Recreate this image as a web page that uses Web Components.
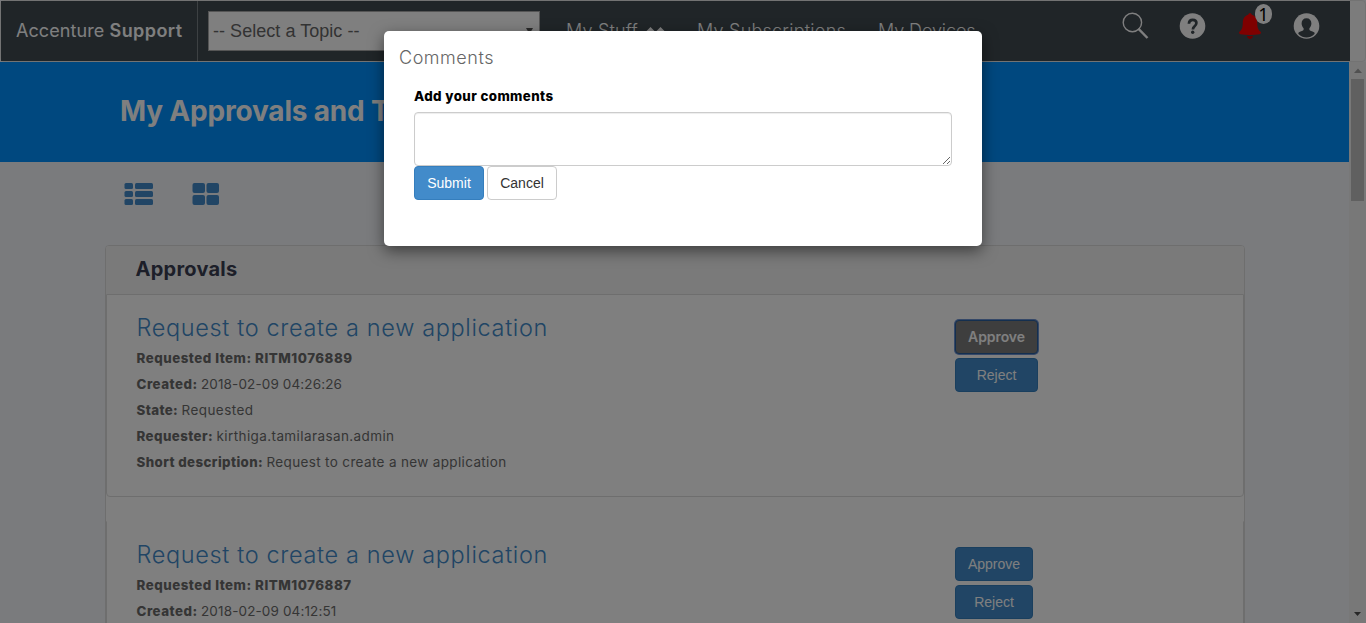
<!DOCTYPE html>
<html lang="en">
<head>
<meta charset="utf-8">
<title>My Approvals and Tasks</title>
<style>
html,body{margin:0;height:100%;overflow:hidden;background:#f4f6fa}
body{font-family:Inter,"Open Sans",sans-serif;color:#777}
</style>
</head>
<body>
<support-app></support-app>
<script>
const define = (name, html, setup) => customElements.define(name, class extends HTMLElement {
  constructor() {
    super();
    const t = document.createElement('template');
    t.innerHTML = html;
    this.attachShadow({mode: 'open'}).append(t.content.cloneNode(true));
  }
  connectedCallback() { if (setup) setup(this, this.shadowRoot); }
});

/* Text tracked so that its run has the width given in "w". */
define('tracked-text', `<style>:host{display:inline-block;white-space:pre}span{display:inline-block}</style><span><slot></slot></span>`, (el, root) => {
  const span = root.querySelector('span');
  const w = +el.getAttribute('w');
  const n = el.textContent.length;
  span.style.letterSpacing = '0px';
  const natural = span.getBoundingClientRect().width;
  if (w && natural) span.style.letterSpacing = ((w - natural) / n) + 'px';
});

define('topic-select', `<style>
:host{display:flex;box-sizing:border-box;width:332px;height:40px;border:1px solid #aaa;background:#fff;align-items:center;justify-content:space-between;padding:0 6px 1px 4px;font:18px/38px "Liberation Sans",Arial,sans-serif;color:#666}
svg{display:block}
</style><tracked-text w="146.5">-- Select a Topic --</tracked-text><svg width="7" height="6"><path d="M0 0h7L3.5 6z" fill="#555"/></svg>`);

define('header-icons', `<style>
:host{display:flex;position:relative;height:60px;flex:none}
svg{display:block}
.badge{position:absolute;left:134px;top:3px;width:17px;height:20px;border-radius:9px/10px;background:#fff;color:#000;font:18px/20px "Noto Sans",sans-serif;text-align:center}
</style><svg width="229" height="60" viewBox="1121 1 229 60">
<circle cx="1132.4" cy="22.5" r="9.2" fill="none" stroke="#fff" stroke-width="1.4"/>
<path d="M1138.3 28.7l9.2 9.3" stroke="#fff" stroke-width="2.4" fill="none"/>
<circle cx="1192.5" cy="26" r="12.8" fill="#fff"/>
<path d="M1188.9 23.7c.1-2.5 1.5-3.9 3.8-3.9 2.2 0 3.7 1.3 3.7 3.3 0 1.6-.8 2.4-2 3.4-1 .9-1.5 1.4-1.5 2.9" fill="none" stroke="#404a51" stroke-width="2.7"/>
<circle cx="1192.7" cy="32.3" r="1.7" fill="#404a51"/>
<path d="M1250 13.2c1.2 0 1.6.7 1.8 1.6 3.8 1.2 5.3 4.1 5.4 7.7.1 5 .8 7.4 3.4 9.3.9.8.1 2.2-1 2.4-5.9 1.1-13.4 1.1-19.2 0-1.1-.2-1.9-1.6-1-2.4 2.6-1.900 3.300-4.300 3.400-9.300.1-3.600 1.600-6.500 5.400-7.700.2-.9.6-1.600 1.800-1.600z" fill="#ff0000"/>
<path d="M1247 35.800c2 .3 4 .3 6 0 0 4.200-6 4.200-6 0z" fill="#d00000"/>
<circle cx="1306.500" cy="26" r="12.800" fill="#fff"/>
<path d="M1306.500 18.200c3 0 4.900 2 4.900 5 0 2-.8 3.900-2 5.100v1.500c.3 1.200 2.600 1.500 4.600 2.400 1 .5.8 1.600 0 2.400-2 2-4.700 3-7.500 3s-5.500-1-7.500-3c-.8-.8-1-1.900 0-2.400 2-.9 4.300-1.200 4.600-2.400v-1.500c-1.200-1.200-2-3.100-2-5.100 0-3 1.900-5 4.900-5z" fill="#404a51"/>
</svg><span class="badge">1</span>`);

define('top-bar', `<style>
:host{display:block;box-sizing:border-box;height:62px;border:1px solid #e7e7e7;border-radius:4px;background:#f8f8f8}
.bar{display:flex;width:1349px;height:60px;background:#404a51;color:#fff}
.brand{box-sizing:border-box;width:197px;border-right:1px solid #7b8387;padding-left:15px;font-size:18px;line-height:60px;white-space:nowrap}
.brand b{font-weight:600}
topic-select{margin:10px 0 0 10px}
nav{display:flex;padding-left:26px;font-size:18px;line-height:60px;flex:1;font-weight:300}
.stuff{width:131px;display:flex}.subs{width:181px}
.stuff svg{margin:25px 0 0 8px}
</style><div class="bar"><div class="brand"><tracked-text w="93.5">Accenture </tracked-text><b><tracked-text w="73">Support</tracked-text></b></div>
<topic-select></topic-select>
<nav><span class="stuff"><tracked-text w="72">My Stuff</tracked-text><svg width="20" height="10"><path d="M0 5.500l4.500-4.500L9 5.500 4.500 9.500zM10 5.500l4.500-4.500L19 5.500l-4.500 4z" fill="#fff"/></svg></span><span class="subs"><tracked-text w="149">My Subscriptions</tracked-text></span><span><tracked-text w="97.5">My Devices</tracked-text></span></nav>
<header-icons></header-icons></div>`);

define('page-banner', `<style>
:host{display:block;height:100px;background:#0090ff;color:#fff;padding-left:120px;font-size:28px;font-weight:700;line-height:98px;white-space:nowrap}
</style><tracked-text w="251">My Approvals and </tracked-text><tracked-text>T</tracked-text>`);

define('view-switch', `<style>
:host{display:flex;height:83px;padding-left:124px;gap:39px}svg{display:block;margin-top:21px}
</style><svg width="29" height="23" fill="#428bca"><rect x=".5" width="8.500" height="6" rx="1.500"/><rect x="11" width="18" height="6" rx="1.500"/><rect x=".5" y="8" width="8.500" height="6" rx="1.500"/><rect x="11" y="8" width="18" height="6" rx="1.500"/><rect x=".5" y="16" width="8.500" height="6" rx="1.500"/><rect x="11" y="16" width="18" height="6" rx="1.500"/></svg>
<svg width="28" height="23" fill="#428bca"><rect x=".5" width="12.500" height="10" rx="2"/><rect x="14.500" width="12.500" height="10" rx="2"/><rect x=".5" y="12" width="12.500" height="10" rx="2"/><rect x="14.500" y="12" width="12.500" height="10" rx="2"/></svg>`);

define('ui-button', `<style>
:host{display:block}
button{display:block;box-sizing:border-box;width:100%;height:34px;margin:0;padding:0;border:1px solid #357ebd;border-radius:4px;background:#428bca;color:#fff;font:14px/20px "Liberation Sans",Arial,sans-serif;text-align:center}
:host([kind=plain]) button{background:#fff;border-color:#ccc;color:#333}
:host([kind=focused]) button{background:#7c7c7c;border-color:#285e9e;color:#fff;font:600 14px/20px Inter,sans-serif;box-shadow:0 0 0 1px #6a90d0}
</style><button><slot></slot></button>`);

define('approval-card', `<style>
:host{display:flex;box-sizing:border-box;height:203px;margin-bottom:24px;border:1px solid #ddd;border-radius:0 0 4px 4px;background:#fff}
:host([open-top]){border-top-color:#fff}
.info{width:848px;padding-left:29.500px;box-sizing:border-box;color:#6b6b6b}
h3{margin:13px 0 3px;height:34px;line-height:39px;font-size:23.500px;font-weight:350;color:#428bca;white-space:nowrap}
.row{height:26px;line-height:27px;font-size:13.500px;white-space:pre}
b{font-weight:800;font-size:13.300px}
.actions{display:flex;flex-direction:column;gap:4px;padding-top:25px}
</style><div class="info"><h3><tracked-text w="411.5">Request to create a new application</tracked-text></h3><div class="rows"></div></div>
<div class="actions"><ui-button class="a">Approve</ui-button><ui-button>Reject</ui-button></div>`, (el, root) => {
  const rows = JSON.parse(el.getAttribute('rows'));
  root.querySelector('.rows').innerHTML = rows.map(([k, kw, v, vw]) =>
    `<div class="row"><b><tracked-text w="${kw}">${k} </tracked-text></b>${v ? `<tracked-text w="${vw}">${v}</tracked-text>` : ''}</div>`).join('');
  root.querySelector('.actions').style.width = el.getAttribute('actions') + 'px';
  if (el.hasAttribute('focused')) {
    const a = root.querySelector('.a');
    a.setAttribute('kind', 'focused');
    a.innerHTML = '<tracked-text w="57">Approve</tracked-text>';
  }
});

define('approvals-panel', `<style>
:host{display:block;box-sizing:border-box;width:1140px;height:420px;margin-left:105px;border:1px solid #ddd;border-radius:4px;background:#fff}
h2{margin:0;height:48px;padding-left:29.500px;background:#f5f5f5;border-radius:3px 3px 0 0;font-size:20px;line-height:47px;font-weight:700;color:#3a3e52}
</style><h2><tracked-text w="102">Approvals</tracked-text></h2><slot></slot>`);

define('side-scroll', `<style>
:host{display:flex;flex-direction:column;align-items:center;width:17px;background:#f1f1f1;flex:none}
i{display:block;width:13px;height:122px;background:#c1c1c1}
svg{display:block;flex:none}.down{margin-top:auto}
</style><svg width="17" height="17"><path d="M5 11h8L9 6.500z" fill="#a3a3a3"/></svg><i></i><svg class="down" width="17" height="17"><path d="M5 6h7L8.500 10z" fill="#505050"/></svg>`);

define('comment-dialog', `<style>
:host{display:block;box-sizing:border-box;width:598px;height:215px;padding:15px 30px 0;border-radius:5px;background:#fff;box-shadow:0 5px 15px rgba(0,0,0,.5)}
h4{margin:0 0 0 -15px;height:38px;font-size:18px;line-height:24px;font-weight:300;color:#666}
label{display:block;height:28px;font-size:13.300px;line-height:24px;font-weight:800;color:#000}
textarea{display:block;box-sizing:border-box;width:538px;height:54px;margin:0;border:1px solid #ccc;border-radius:4px;box-shadow:inset 0 1px 1px rgba(0,0,0,.075);outline:0;resize:vertical}
.buttons{display:flex;gap:3px}.buttons ui-button{width:70px}
</style><h4><tracked-text w="95">Comments</tracked-text></h4><label><tracked-text w="139.500">Add your comments</tracked-text></label><textarea aria-label="Add your comments"></textarea>
<div class="buttons"><ui-button>Submit</ui-button><ui-button kind="plain">Cancel</ui-button></div>`);

define('support-app', `<style>
:host{display:block;position:relative;height:623px;overflow:hidden;background:#f4f6fa}
.body{display:flex;height:561px}
main{width:1349px;flex:none;overflow:hidden}
.shade{position:absolute;inset:0;background:rgba(0,0,0,.5);display:flex;justify-content:center;align-items:flex-start;padding-top:31px}
</style><top-bar></top-bar>
<div class="body"><main><page-banner></page-banner><view-switch></view-switch>
<approvals-panel>
<approval-card focused actions="83" rows='[["Requested Item: RITM1076889",219.5,"",0],["Created:",64.5,"2018-02-09 04:26:26",141],["State:",45,"Requested",72],["Requester:",80,"kirthiga.tamilarasan.admin",178],["Short description:",130,"Request to create a new application",240]]'></approval-card>
<approval-card open-top actions="78" rows='[["Requested Item: RITM1076887",218.5,"",0],["Created:",64.5,"2018-02-09 04:12:51",135.5]]'></approval-card>
</approvals-panel></main><side-scroll></side-scroll></div>
<div class="shade"><comment-dialog></comment-dialog></div>`);
</script>
</body>
</html>
